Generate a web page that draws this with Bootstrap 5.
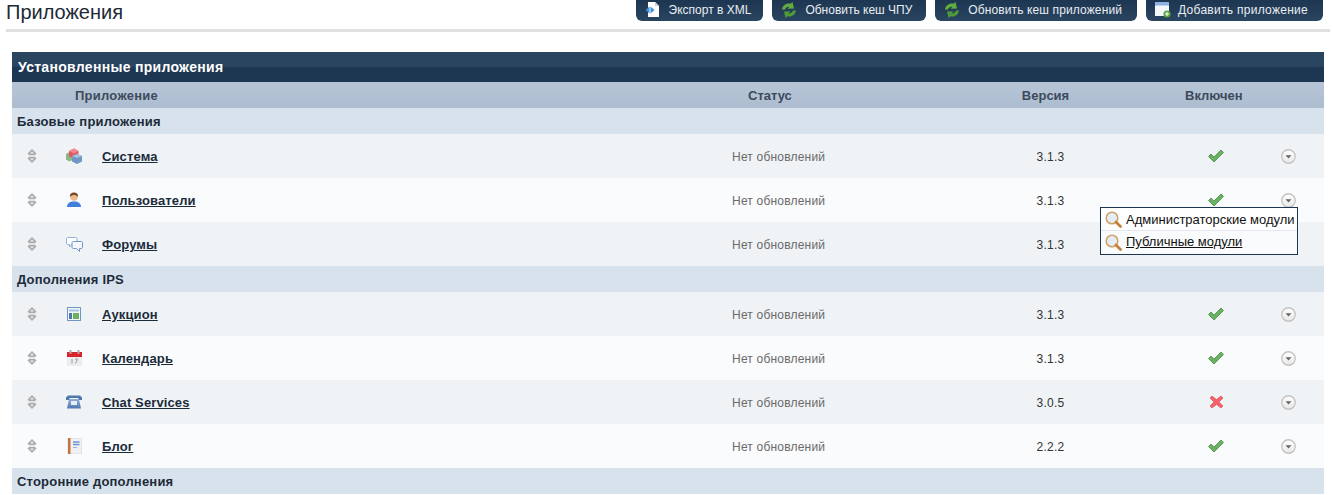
<!DOCTYPE html>
<html lang="ru">
<head>
<meta charset="utf-8">
<title>Приложения</title>
<link rel="stylesheet" href="https://cdn.jsdelivr.net/npm/bootstrap@5.3.0/dist/css/bootstrap.min.css">
<style>
html,body{height:495px;overflow:hidden}
body{font-family:"Liberation Sans",Arial,sans-serif;font-size:12px;color:#222;background:#fff}
.page-head{margin:0 3px 0 6px;height:32px;border-bottom:3px solid #e0e0e0}
.page-title{font-size:20px;line-height:24px;font-weight:400;color:#1d2a36;margin:0}
.act-btn{height:21px;padding:0 13px 2px 9px;font-size:12px;line-height:18px;color:#e8edf2;background:linear-gradient(#1d3652,#2a4560);border:0;border-radius:0 0 6px 6px;white-space:nowrap;gap:8px}
.act-btn:hover{color:#fff;background:#2a4560}
.act-btn.first-btn{gap:9px;padding-right:12px}
.act-btn.mid-btn{padding-right:14px}
.act-btn.wide-a{letter-spacing:.12px;padding-right:15px}
.act-btn.wide-b{letter-spacing:.28px;gap:7px;padding-right:15px}
.act-wrap{margin-right:7px;gap:9px}
.table-wrap{margin:20px 9px 0 12px;position:relative}
.sec-title{height:30px;padding-left:6px;font-size:14px;font-weight:700;line-height:30px;letter-spacing:.3px;color:#fff;background:linear-gradient(#2a4560 0,#2a4560 50%,#1d3652 50%,#1d3652 100%)}
.apps-tbl{--bs-table-bg:transparent;--bs-table-border-color:transparent;table-layout:fixed;margin:0;width:100%;border-collapse:collapse}
.apps-tbl.table>thead>tr>th{height:26px;padding:2px 0 0;font-size:13px;font-weight:700;color:#3d4a5c;background:linear-gradient(#b6c5d6,#adbdd0);vertical-align:middle;border:0;text-align:left}
.apps-tbl.table>tbody>tr>td{padding:0;height:44px;vertical-align:middle;border:0;font-size:12px}
.apps-tbl.table>tbody>tr.grp>td{height:26px;background:#d8e2ec;padding:2px 0 0 5px;font-size:13px;font-weight:700;letter-spacing:.2px;color:#1c2b3a}
.apps-tbl.table>tbody>tr.alt1>td{background:#f0f3f6}
.apps-tbl.table>tbody>tr.alt2>td{background:#fafbfd}
.apps-tbl.table>thead>tr>th.th-app{padding-left:63px;letter-spacing:.25px}
.apps-tbl.table>thead>tr>th.th-st{padding-left:80px}
.apps-tbl.table>thead>tr>th.th-ver{text-align:center;padding-right:10px}
.apps-tbl.table>thead>tr>th.th-on{padding-left:29px}
.apps-tbl.table>tbody>tr>td.st-txt{padding:2px 0 0 64px;color:#6a6a6a;letter-spacing:.2px}
.apps-tbl.table>tbody>tr>td.ver-txt{padding-top:2px;text-align:center;color:#333;letter-spacing:.3px}
.apps-tbl.table>tbody>tr>td.name-cell{padding:2px 0 0 6px}
.app-link{font-size:13px;font-weight:700;color:#1c2b3a;text-decoration:underline;letter-spacing:.12px}
.ico{display:block;margin:0 auto}
.chev-cell svg{display:block;margin-left:5px}
.drop-menu{position:absolute;left:1088px;top:155px;width:198px;height:48px;background:#fff;border:1px solid #1d3652;font-size:13px;z-index:5}
.drop-item{height:23px;padding-left:4px;gap:4px;color:#111;text-decoration:none;white-space:nowrap}
.drop-item.first{border-bottom:1px solid #e3e8f0;padding-top:1px}
.drop-item.hov{background:#fafbfd;padding-bottom:1px}
.drop-item.hov span{text-decoration:underline}
</style>
</head>
<body>
<svg width="0" height="0" class="position-absolute">
<defs>
<linearGradient id="gBlue" x1="0" y1="0" x2="0" y2="1"><stop offset="0" stop-color="#8fb0d8"/><stop offset="1" stop-color="#4f78ad"/></linearGradient>
<linearGradient id="gChev" x1="0" y1="0" x2="0" y2="1"><stop offset="0" stop-color="#ffffff"/><stop offset="1" stop-color="#e8e8e8"/></linearGradient>
<symbol id="i-drag" viewBox="0 0 10 14"><path d="M5 0 9.500 4.500 8 6.200H2L.5 4.500Z" fill="#acacac"/><path d="M5 2.200 7 4.400H3Z" fill="#e8e8e8"/><path d="M5 14 9.500 9.500 8 7.800H2L.5 9.500Z" fill="#acacac"/><path d="M5 11.800 7 9.600H3Z" fill="#e8e8e8"/></symbol>
<symbol id="i-check" viewBox="0 0 16 14"><path d="M0.500 7.500 3 5 6 8 13 1 15.500 3.500 6 13Z" fill="#69b25f" stroke="#4a8c46" stroke-width=".8"/></symbol>
<symbol id="i-cross" viewBox="0 0 15 14"><path d="M1 3 3 1 7.500 4.500 12 1 14 3 10 7 14 11 12 13 7.500 9.500 3 13 1 11 5 7Z" fill="#f4636b" stroke="#e0454e" stroke-width=".6"/></symbol>
<symbol id="i-chev" viewBox="0 0 16 16"><circle cx="8" cy="8" r="7.200" fill="url(#gChev)" stroke="#c2c2c2" stroke-width="1.400"/><path d="M4.800 6.600H11.200L8 10Z" fill="#666"/></symbol>
<symbol id="i-sync" viewBox="0 0 16 16"><path d="M1 7.500C1.500 3 6 .5 9.500 1.800L11.500 0 13 6.500 6.500 6.800 8.500 4.800C6.500 4.300 4.800 5.300 4 7.500Z" fill="#62ad42"/><path d="M15 8.500C14.500 13 10 15.500 6.500 14.200L4.500 16 3 9.500 9.500 9.200 7.500 11.200C9.500 11.700 11.200 10.700 12 8.500Z" fill="#4f9a38"/></symbol>
<symbol id="i-mag" viewBox="0 0 17 17"><circle cx="7" cy="7" r="5.800" fill="#e4edf6" stroke="#cfa264" stroke-width="1.500"/><path d="M11 11 15.500 15.500" stroke="#c77f3a" stroke-width="2.800" stroke-linecap="round"/></symbol>
</defs>
</svg>

<header class="page-head d-flex justify-content-between align-items-start">
<h1 class="page-title">Приложения</h1>
<div class="act-wrap d-flex">
<a href="#" class="btn act-btn first-btn d-flex align-items-center">
<svg width="15" height="16" viewBox="0 0 15 16"><path d="M3 0H10L14 4V15H3Z" fill="#fff"/><path d="M10 0V4H14Z" fill="#c5d4e6"/><path d="M.500 8 4.500 4.500V11.500ZM9.500 8 5.500 4.500V11.500Z" fill="#3d8fe0"/></svg>
<span>Экспорт в XML</span></a>
<a href="#" class="btn act-btn mid-btn d-flex align-items-center">
<svg width="16" height="16"><use href="#i-sync"/></svg><span>Обновить кеш ЧПУ</span></a>
<a href="#" class="btn act-btn wide-a d-flex align-items-center">
<svg width="16" height="16"><use href="#i-sync"/></svg><span>Обновить кеш приложений</span></a>
<a href="#" class="btn act-btn wide-b d-flex align-items-center">
<svg width="16" height="16" viewBox="0 0 16 16"><rect x="0" y="0" width="14" height="14" fill="#f4f6fa"/><rect x="0" y="0" width="14" height="3.500" fill="#8fb0e0"/><circle cx="12" cy="12" r="3.600" fill="#5aa63e"/><path d="M12 10V14M10 12H14" stroke="#fff"/></svg>
<span>Добавить приложение</span></a>
</div>
</header>

<main class="table-wrap">
<div class="sec-title">Установленные приложения</div>
<table class="table apps-tbl">
<colgroup><col style="width:40px"><col style="width:44px"><col style="width:572px"><col style="width:277px"><col style="width:211px"><col style="width:120px"><col></colgroup>
<thead><tr><th colspan="3" class="th-app">Приложение</th><th class="th-st">Статус</th><th class="th-ver">Версия</th><th class="th-on">Включен</th><th></th></tr></thead>
<tbody>
<tr class="grp"><td colspan="7">Базовые приложения</td></tr>
<tr class="alt1"><td><svg class="ico" width="10" height="14"><use href="#i-drag"/></svg></td>
<td><svg class="ico" width="18" height="16" viewBox="0 0 17 16"><path d="M.5 6 4 4 7 6V12L4 13.500 .5 11.500Z" fill="#8db686"/><path d="M3.500 3 8.500 .5 13 3V8.500L8.500 10.500 3.500 8.500Z" fill="#e4575f"/><path d="M3.500 3 8.500 5.500 13 3 8.500 .5Z" fill="#f08a8e"/><path d="M6.500 8 11.500 6 16.500 8V13.500L11.500 16 6.500 13.500Z" fill="#6f96c4"/><path d="M6.500 8 11.500 10 16.500 8 11.500 6Z" fill="#a8c3e0"/></svg></td>
<td class="name-cell"><a href="#" class="app-link">Система</a></td><td class="st-txt">Нет обновлений</td><td class="ver-txt">3.1.3</td>
<td><svg class="ico" width="16" height="14"><use href="#i-check"/></svg></td><td class="chev-cell"><svg width="15" height="15"><use href="#i-chev"/></svg></td></tr>
<tr class="alt2"><td><svg class="ico" width="10" height="14"><use href="#i-drag"/></svg></td>
<td><svg class="ico" width="16" height="16" viewBox="0 0 16 16"><path d="M1 15C1 11.500 3.500 9.500 8 9.500S15 11.500 15 15Z" fill="#3f7fdc"/><circle cx="8" cy="5" r="3.800" fill="#eab98e"/><path d="M4 5C3.500 1.500 6 .5 8 .5S12.500 1.500 12 5C11 3.500 9 3 8 3S5 3.500 4 5Z" fill="#7a4a2a"/></svg></td>
<td class="name-cell"><a href="#" class="app-link">Пользователи</a></td><td class="st-txt">Нет обновлений</td><td class="ver-txt">3.1.3</td>
<td><svg class="ico" width="16" height="14"><use href="#i-check"/></svg></td><td class="chev-cell"><svg width="15" height="15"><use href="#i-chev"/></svg></td></tr>
<tr class="alt1"><td><svg class="ico" width="10" height="14"><use href="#i-drag"/></svg></td>
<td><svg class="ico" width="17" height="15" viewBox="0 0 17 15"><path d="M2 .5H9.500C10.500.5 11 1 11 2V6C11 7 10.500 7.500 9.500 7.500H5.500L3.500 10V7.500H2C1 7.500.5 7 .5 6V2C.5 1 1 .5 2 .5Z" fill="#fff" stroke="#8fb0d8"/><path d="M7.500 4.500H15C16 4.500 16.500 5 16.500 6V10C16.500 11 16 11.500 15 11.500H13.500V14.500L10.500 11.500H7.500C6.500 11.500 6 11 6 10V6C6 5 6.500 4.500 7.500 4.500Z" fill="#f4f8fc" stroke="#6f96c4"/></svg></td>
<td class="name-cell"><a href="#" class="app-link">Форумы</a></td><td class="st-txt">Нет обновлений</td><td class="ver-txt">3.1.3</td>
<td></td><td></td></tr>
<tr class="grp"><td colspan="7">Дополнения IPS</td></tr>
<tr class="alt1"><td><svg class="ico" width="10" height="14"><use href="#i-drag"/></svg></td>
<td><svg class="ico" width="14" height="14" viewBox="0 0 14 14"><rect x=".5" y=".5" width="13" height="13" fill="#f2f6fb" stroke="#6f96c4"/><rect x="2" y="2.500" width="10" height="2" fill="#a9c3e4"/><rect x="2" y="6" width="3" height="6" fill="#4f78ad"/><rect x="6" y="6" width="6" height="6" fill="#6cb060"/></svg></td>
<td class="name-cell"><a href="#" class="app-link">Аукцион</a></td><td class="st-txt">Нет обновлений</td><td class="ver-txt">3.1.3</td>
<td><svg class="ico" width="16" height="14"><use href="#i-check"/></svg></td><td class="chev-cell"><svg width="15" height="15"><use href="#i-chev"/></svg></td></tr>
<tr class="alt2"><td><svg class="ico" width="10" height="14"><use href="#i-drag"/></svg></td>
<td><svg class="ico" width="15" height="16" viewBox="0 0 15 16"><rect x="0" y="2" width="15" height="14" fill="#eceded"/><rect x="0" y="2" width="15" height="5" fill="#d8232a"/><rect x="2.500" y="0" width="2" height="4" fill="#aaa"/><rect x="10.500" y="0" width="2" height="4" fill="#aaa"/><path d="M5 9V13.500M8 9H10.500L8.500 13.500" stroke="#9aa0a6" fill="none"/></svg></td>
<td class="name-cell"><a href="#" class="app-link">Календарь</a></td><td class="st-txt">Нет обновлений</td><td class="ver-txt">3.1.3</td>
<td><svg class="ico" width="16" height="14"><use href="#i-check"/></svg></td><td class="chev-cell"><svg width="15" height="15"><use href="#i-chev"/></svg></td></tr>
<tr class="alt1"><td><svg class="ico" width="10" height="14"><use href="#i-drag"/></svg></td>
<td><svg class="ico" width="16" height="14" viewBox="0 0 16 14"><path d="M0 5V2.500L2 .5H14L16 2.500V5H12.500V3H3.500V5Z" fill="#4f78ad"/><path d="M3 4H13L15 13.500H1Z" fill="url(#gBlue)"/><rect x="5" y="6" width="6" height="4" fill="#e6eef8"/></svg></td>
<td class="name-cell"><a href="#" class="app-link">Chat Services</a></td><td class="st-txt">Нет обновлений</td><td class="ver-txt">3.0.5</td>
<td><svg class="ico" width="15" height="14"><use href="#i-cross"/></svg></td><td class="chev-cell"><svg width="15" height="15"><use href="#i-chev"/></svg></td></tr>
<tr class="alt2"><td><svg class="ico" width="10" height="14"><use href="#i-drag"/></svg></td>
<td><svg class="ico" width="15" height="16" viewBox="0 0 15 16"><rect x="1" y="0" width="14" height="16" fill="#eef0f2" stroke="#c8ccd0" stroke-width=".6"/><rect x="1" y="0" width="2.500" height="16" fill="#c9713c"/><path d="M6 4H12.500M6 6.500H12.500" stroke="#6f96d4" stroke-width="1.300"/><path d="M6 9.500H10" stroke="#9ab4dc"/></svg></td>
<td class="name-cell"><a href="#" class="app-link">Блог</a></td><td class="st-txt">Нет обновлений</td><td class="ver-txt">2.2.2</td>
<td><svg class="ico" width="16" height="14"><use href="#i-check"/></svg></td><td class="chev-cell"><svg width="15" height="15"><use href="#i-chev"/></svg></td></tr>
<tr class="grp"><td colspan="7">Сторонние дополнения</td></tr>
</tbody>
</table>
<div class="drop-menu">
<a href="#" class="drop-item first d-flex align-items-center"><svg width="17" height="17"><use href="#i-mag"/></svg><span>Администраторские модули</span></a>
<a href="#" class="drop-item hov d-flex align-items-center"><svg width="17" height="17"><use href="#i-mag"/></svg><span>Публичные модули</span></a>
</div>
</main>
<script src="https://cdn.jsdelivr.net/npm/bootstrap@5.3.0/dist/js/bootstrap.bundle.min.js"></script>
</body>
</html>
